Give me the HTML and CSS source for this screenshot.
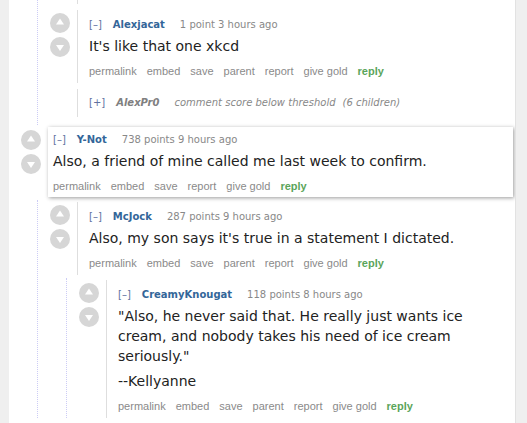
FILE: index.html
```html
<!DOCTYPE html>
<html>
<head>
<meta charset="utf-8">
<link rel="stylesheet" href="styles.css">
</head>
<body>
<div class="page">
  <div class="comment">
    <div class="children children-top">
      <div class="entry-tail"></div>
      <div class="comment sib">
        <div class="row">
          <div class="midcol">
            <svg class="arrow" viewBox="0 0 20 20"><circle cx="10" cy="10" r="10" fill="#d6d6d6"/><path d="M10 5.5 L14 11.5 L6 11.5 Z" fill="#fff"/></svg>
            <svg class="arrow" viewBox="0 0 20 20"><circle cx="10" cy="10" r="10" fill="#d6d6d6"/><path d="M6 8 L14 8 L10 14 Z" fill="#fff"/></svg>
          </div>
          <div class="entry">
            <p class="tagline"><span class="expand">[–]</span><span class="author">Alexjacat</span><span class="score">1 point 3 hours ago</span></p>
            <div class="md"><p>It's like that one xkcd</p></div>
            <ul class="buttons"><li>permalink</li><li>embed</li><li>save</li><li>parent</li><li>report</li><li>give gold</li><li class="reply">reply</li></ul>
          </div>
        </div>
      </div>
      <div class="comment sib collapsed">
        <div class="row">
          <div class="midcol"></div>
          <div class="entry">
            <p class="tagline"><span class="expand">[+]</span><span class="author-c">AlexPr0</span><span class="threshold">comment score below threshold</span><span class="kids">(6 children)</span></p>
          </div>
        </div>
      </div>
    </div>
  </div>

  <div class="comment highlighted">
    <div class="row">
      <div class="midcol">
        <svg class="arrow" viewBox="0 0 20 20"><circle cx="10" cy="10" r="10" fill="#d6d6d6"/><path d="M10 5.5 L14 11.5 L6 11.5 Z" fill="#fff"/></svg>
        <svg class="arrow" viewBox="0 0 20 20"><circle cx="10" cy="10" r="10" fill="#d6d6d6"/><path d="M6 8 L14 8 L10 14 Z" fill="#fff"/></svg>
      </div>
      <div class="entry">
        <p class="tagline"><span class="expand">[–]</span><span class="author">Y-Not</span><span class="score">738 points 9 hours ago</span></p>
        <div class="md"><p>Also, a friend of mine called me last week to confirm.</p></div>
        <ul class="buttons"><li>permalink</li><li>embed</li><li>save</li><li>report</li><li>give gold</li><li class="reply">reply</li></ul>
      </div>
    </div>
    <div class="children">
      <div class="comment">
        <div class="row">
          <div class="midcol">
            <svg class="arrow" viewBox="0 0 20 20"><circle cx="10" cy="10" r="10" fill="#d6d6d6"/><path d="M10 5.5 L14 11.5 L6 11.5 Z" fill="#fff"/></svg>
            <svg class="arrow" viewBox="0 0 20 20"><circle cx="10" cy="10" r="10" fill="#d6d6d6"/><path d="M6 8 L14 8 L10 14 Z" fill="#fff"/></svg>
          </div>
          <div class="entry">
            <p class="tagline"><span class="expand">[–]</span><span class="author">McJock</span><span class="score">287 points 9 hours ago</span></p>
            <div class="md"><p>Also, my son says it's true in a statement I dictated.</p></div>
            <ul class="buttons"><li>permalink</li><li>embed</li><li>save</li><li>parent</li><li>report</li><li>give gold</li><li class="reply">reply</li></ul>
          </div>
        </div>
        <div class="children">
          <div class="comment">
            <div class="row">
              <div class="midcol">
                <svg class="arrow" viewBox="0 0 20 20"><circle cx="10" cy="10" r="10" fill="#d6d6d6"/><path d="M10 5.5 L14 11.5 L6 11.5 Z" fill="#fff"/></svg>
                <svg class="arrow" viewBox="0 0 20 20"><circle cx="10" cy="10" r="10" fill="#d6d6d6"/><path d="M6 8 L14 8 L10 14 Z" fill="#fff"/></svg>
              </div>
              <div class="entry">
                <p class="tagline"><span class="expand">[–]</span><span class="author">CreamyKnougat</span><span class="score">118 points 8 hours ago</span></p>
                <div class="md"><p>"Also, he never said that. He really just wants ice cream, and nobody takes his need of ice cream seriously."</p><p>--Kellyanne</p></div>
                <ul class="buttons"><li>permalink</li><li>embed</li><li>save</li><li>parent</li><li>report</li><li>give gold</li><li class="reply">reply</li></ul>
              </div>
            </div>
          </div>
        </div>
      </div>
    </div>
  </div>
</div>
</body>
</html>
```

FILE: styles.css
```css
* { box-sizing: border-box; }
html, body { margin: 0; padding: 0; }
body {
  background: #efefef;
  font-family: "DejaVu Sans", Verdana, sans-serif;
}
.page {
  margin-left: 9px;
  width: 507px;
  min-height: 100vh;
  background: #fff;
  border-right: 1px solid #e2e2e2;
  overflow: hidden;
}
.row {
  display: flex;
  align-items: flex-start;
}
.midcol {
  flex: 0 0 20px;
  margin: 0 7px 0 12px;
  padding-top: 3px;
  display: flex;
  flex-direction: column;
  gap: 4px;
}
.arrow {
  display: block;
  width: 20px;
  height: 20px;
}
.entry {
  flex: 1;
  min-width: 0;
  border-left: 1px solid #dedede;
  padding: 8px 5px 5px 11px;
}
.entry-tail {
  margin-left: 39px;
  height: 4px;
  border-left: 1px solid #dedede;
}
.tagline {
  margin: 0;
  font-size: 10px;
  line-height: 14px;
  color: #888;
  white-space: nowrap;
}
.expand {
  color: #60719f;
  margin-right: 11px;
}
.author {
  color: #369;
  font-weight: bold;
  margin-right: 15px;
}
.author-c {
  color: #808080;
  font-weight: bold;
  font-style: italic;
  margin-right: 15px;
}
.threshold {
  font-style: italic;
  color: #888;
}
.kids {
  font-style: italic;
  color: #888;
  margin-left: 7px;
}
.md {
  font-size: 14px;
  line-height: 20px;
  color: #222;
}
.md p {
  margin: 4px 0 5px;
}
.buttons {
  list-style: none;
  margin: 8px 0 0;
  padding: 0;
  display: flex;
  gap: 10px;
  font-family: "Liberation Sans", Arial, sans-serif;
  font-size: 11px;
  line-height: 14px;
  color: #8a8a8a;
  white-space: nowrap;
}
.buttons .reply {
  color: #5ba55b;
  font-weight: bold;
}
.children {
  margin-left: 28px;
  margin-top: 3px;
  padding-top: 2px;
  border-left: 1px dotted #ccccf5;
}
.children-top {
  margin-top: 0;
  padding-top: 0;
  padding-bottom: 8px;
}
.sib {
  margin-top: 6px;
}
.collapsed .entry {
  padding: 7px 5px 7px 11px;
}
.highlighted {
  margin-top: 2px;
}
.highlighted > .row > .entry {
  border-left: none;
  padding: 6px 5px 4px 5px;
  margin-right: 2px;
  box-shadow: 1px 1px 4px rgba(0, 0, 0, 0.4);
}
```
